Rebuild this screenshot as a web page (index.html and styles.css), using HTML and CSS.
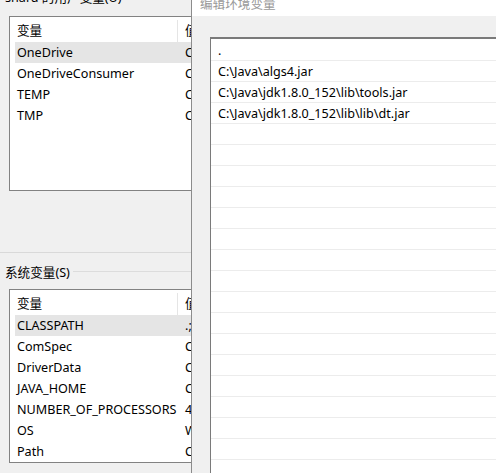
FILE: index.html
```html
<!DOCTYPE html>
<html lang="zh-CN">
<head>
<meta charset="UTF-8">
<meta name="viewport" content="width=device-width, initial-scale=1.0">
<title>环境变量</title>
<link rel="stylesheet" href="styles.css">
</head>
<body>
<div class="envPane">
    <div class="caption">shard 的用户变量(U)</div>
    <div class="listbox userList">
        <div class="row head"><span class="name">变量</span><span class="value">值</span></div>
        <div class="row selected"><span class="name">OneDrive</span><span class="value">C:\Users\shard\OneDrive</span></div>
        <div class="row"><span class="name">OneDriveConsumer</span><span class="value">C:\Users\shard\OneDrive</span></div>
        <div class="row"><span class="name">TEMP</span><span class="value">C:\Users\shard\AppData\Local\Temp</span></div>
        <div class="row"><span class="name">TMP</span><span class="value">C:\Users\shard\AppData\Local\Temp</span></div>
    </div>
    <div class="divider"></div>
    <div class="group"><span>系统变量(S)</span></div>
    <div class="listbox sysList">
        <div class="row head"><span class="name">变量</span><span class="value">值</span></div>
        <div class="row selected"><span class="name">CLASSPATH</span><span class="value">.;C:\Java\algs4.jar</span></div>
        <div class="row"><span class="name">ComSpec</span><span class="value">C:\WINDOWS\system32\cmd.exe</span></div>
        <div class="row"><span class="name">DriverData</span><span class="value">C:\Windows\System32\Drivers</span></div>
        <div class="row"><span class="name">JAVA_HOME</span><span class="value">C:\Java\jdk1.8.0_152</span></div>
        <div class="row"><span class="name">NUMBER_OF_PROCESSORS</span><span class="value">4</span></div>
        <div class="row"><span class="name">OS</span><span class="value">Windows_NT</span></div>
        <div class="row"><span class="name">Path</span><span class="value">C:\Java\jdk1.8.0_152\bin</span></div>
    </div>
</div>

<div class="editDialog">
    <div class="titleBar">编辑环境变量</div>
    <div class="dialogBody">
        <ul class="pathList">
            <li>.</li>
            <li>C:\Java\algs4.jar</li>
            <li>C:\Java\jdk1.8.0_152\lib\tools.jar</li>
            <li>C:\Java\jdk1.8.0_152\lib\lib\dt.jar</li>
            <li></li><li></li><li></li><li></li><li></li><li></li>
            <li></li><li></li><li></li><li></li><li></li><li></li>
            <li></li><li></li><li></li><li></li><li></li><li></li>
        </ul>
    </div>
</div>
</body>
</html>
```

FILE: styles.css
```css
body, html {
    margin: 0;
    height: 100%;
}

body {
    display: flex;
    overflow: hidden;
    background-color: #f0f0f0;
    font-family: "Noto Sans", "Noto Sans CJK SC", sans-serif;
    font-size: 12.6px;
    color: #000;
}

/* left side: the environment variables window, covered by the edit dialog */
.envPane {
    width: 191px;
    flex-shrink: 0;
    overflow: hidden;
}

.caption {
    height: 16px;
    line-height: 16px;
    margin-top: -10px;
    padding-left: 5px;
    white-space: nowrap;
}

.listbox {
    width: 300px;
    margin-left: 9px;
    border: 1px solid #828282;
    background-color: #fff;
    padding-left: 5px;
}

.userList {
    margin-top: 10px;
    height: 173px;
}

.sysList {
    margin-top: 10px;
    height: 172px;
}

.row {
    display: flex;
    box-sizing: border-box;
    height: 21px;
    padding-top: 1px;
    line-height: 20px;
    white-space: nowrap;
}

.row .name {
    flex-shrink: 0;
    width: 163px;
    padding-left: 2px;
    box-sizing: border-box;
    overflow: hidden;
}

.row .value {
    padding-left: 7px;
}

.row.head {
    height: 25px;
    padding-top: 3px;
    line-height: 22px;
}

.row.head .name {
    border-right: 1px solid #e5e5e5;
}

.row.selected {
    background-color: #e5e5e5;
}

.divider {
    margin-top: 61px;
    border-top: 1px solid #d9d9d9;
}

.group {
    display: flex;
    align-items: center;
    margin-top: 10px;
    padding-left: 5px;
    height: 16px;
    white-space: nowrap;
}

.group::after {
    content: "";
    flex: 1;
    margin-left: 3px;
    border-top: 1px solid #dcdcdc;
}

/* right side: edit dialog */
.editDialog {
    flex: 1;
    border-left: 1px solid #8c8c8c;
    overflow: hidden;
}

.titleBar {
    height: 16px;
    line-height: 8px;
    background-color: #fff;
    color: #999;
    padding-left: 8px;
    overflow: hidden;
}

.dialogBody {
    padding: 21px 0 0 18px;
}

.pathList {
    list-style: none;
    margin: 0;
    padding: 1px 0 0 0;
    width: 320px;
    border-top: 2px solid #7a7a7a;
    border-left: 1px solid #7a7a7a;
    background-color: #fff;
}

.pathList li {
    box-sizing: border-box;
    height: 21px;
    padding-top: 2px;
    line-height: 18px;
    padding-left: 7px;
    border-bottom: 1px solid #ececec;
    white-space: nowrap;
}
```
